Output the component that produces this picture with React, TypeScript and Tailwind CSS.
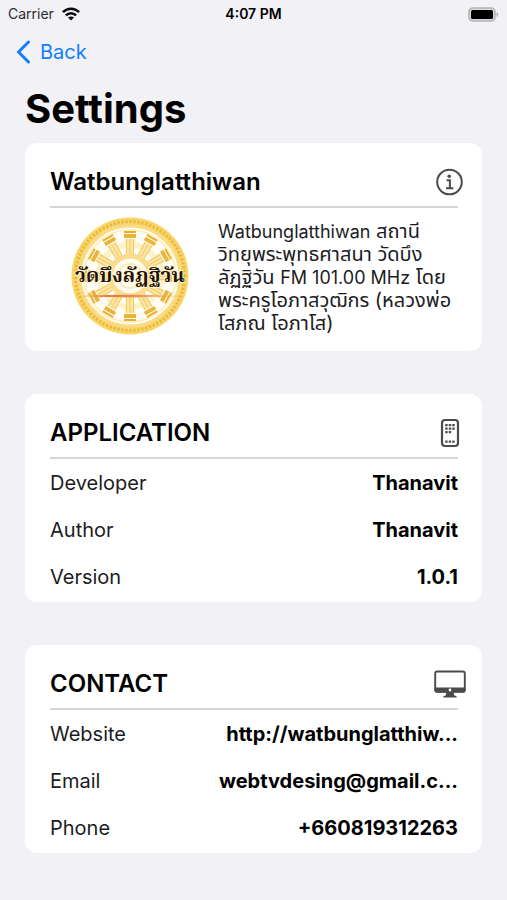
import type { ReactNode } from 'react'

const SPOKES = Array.from({ length: 12 }, (_, i) => i * 30)

function WifiIcon() {
  return (
    <svg width="18" height="14" viewBox="0 0 18 14" fill="none" stroke="#0b0b0d" strokeWidth="2.5" aria-hidden="true">
      <path d="M.9 5.200C5.500.5 12.500.5 17.100 5.200" />
      <path d="M3.900 8.400c2.900-3 7.300-3 10.200 0" />
      <path d="M9 13.600 6 10.600c1.700-1.600 4.300-1.600 6 0z" fill="#0b0b0d" stroke="none" />
    </svg>
  )
}

function BatteryIcon() {
  return (
    <svg width="31" height="15" viewBox="0 0 31 15" aria-hidden="true">
      <rect x="1" y="1" width="26" height="13" rx="4" fill="#d9d9dc" stroke="#b4b4b6" strokeWidth="1.600" />
      <rect x="3" y="3" width="22" height="9" rx="1.500" fill="#000" />
      <path d="M28.500 5.200c2.200.7 2.200 3.900 0 4.600z" fill="#b4b4b6" />
    </svg>
  )
}

function InfoIcon() {
  return (
    <svg width="32" height="32" viewBox="0 0 32 32" fill="none" stroke="#4b4b4b" strokeWidth="2" aria-hidden="true">
      <circle cx="15.500" cy="16" r="12.300" />
      <circle cx="15.200" cy="10.200" r="1.800" fill="#4b4b4b" stroke="none" />
      <path d="M12.500 14.300h3.400v8M12 22.300h7.400" />
    </svg>
  )
}

function PhoneIcon() {
  return (
    <svg width="32" height="32" viewBox="0 0 32 32" fill="#4b4b4b" aria-hidden="true">
      <rect x="8" y="3" width="16" height="26" rx="3" fill="none" stroke="#4b4b4b" strokeWidth="2.200" />
      {[7, 10.500, 14].map((y, row) =>
        [11.200, 14.700, 18.200].map((x) =>
          row === 2 && x > 18 ? null : <rect key={`${x}-${y}`} x={x} y={y} width="2.500" height="2.200" rx="0.500" />
        )
      )}
      {[11.200, 14.700, 18.200].map((x) => (
        <rect key={x} x={x} y="23.500" width="2.500" height="2.200" rx="0.500" />
      ))}
    </svg>
  )
}

function MonitorIcon() {
  return (
    <svg width="32" height="32" viewBox="0 0 32 32" fill="#4b4b4b" aria-hidden="true">
      <rect x="1.200" y="3.500" width="29.600" height="20" rx="2" fill="none" stroke="#4b4b4b" strokeWidth="1.900" />
      <path d="M.5 19.500h31v3.200a2 2 0 0 1-2 2h-27a2 2 0 0 1-2-2z" />
      <path d="M12.500 24h7l.8 3.600 2.300.7v1.200H9.400v-1.200l2.300-.7z" />
      <circle cx="16" cy="22" r="1.400" fill="#fff" />
    </svg>
  )
}

function TempleSeal() {
  return (
    <svg width="120" height="120" viewBox="0 0 120 120" role="img" aria-label="วัดบึงลัฏฐิวัน">
      <defs>
        <linearGradient id="flare">
          <stop offset="0" stopColor="#f0a860" stopOpacity="0" />
          <stop offset="0.3" stopColor="#e07a3c" />
          <stop offset="0.6" stopColor="#e8965a" />
          <stop offset="1" stopColor="#f0a860" stopOpacity="0" />
        </linearGradient>
      </defs>
      <circle cx="60" cy="60" r="58.500" fill="#f8d568" />
      <circle cx="60" cy="60" r="54.500" fill="none" stroke="#e9b53a" strokeWidth="3" strokeDasharray="2 2" />
      <circle cx="60" cy="60" r="50" fill="#fffdf6" stroke="#f9dd86" strokeWidth="3" />
      <circle cx="60" cy="60" r="46" fill="none" stroke="#fdf0c4" strokeWidth="2" />
      <circle cx="60" cy="60" r="31" fill="none" stroke="#fdf1c9" strokeWidth="6" />
      {SPOKES.map((angle) => (
        <g key={angle} transform={`rotate(${angle} 60 60)`}>
          <rect x="54" y="15" width="12" height="2" fill="#e9b02c" />
          <rect x="54" y="18" width="12" height="4" fill="#eab43a" />
          <path d="M55 23h10l-1.500 16h-7z" fill="#fbe6a8" />
          <path d="M56.500 23v15M60 23v16M63.500 23v15" stroke="#f2ca62" strokeWidth="1" />
        </g>
      ))}
      <circle cx="60" cy="60" r="20" fill="#fffaf0" stroke="#f9dd8c" strokeWidth="5" />
      <circle cx="60" cy="60" r="12" fill="#fff" stroke="#fbe9b5" strokeWidth="2" />
      <ellipse cx="60" cy="80" rx="57" ry="1.200" fill="url(#flare)" />
      <text
        x="60"
        y="66"
        textAnchor="middle"
        fontSize="20"
        fill="#1c1206"
        stroke="#fff3cf"
        strokeWidth="2"
        paintOrder="stroke"
        className="font-['Noto_Serif_Thai','Liberation_Serif',serif] font-bold"
      >
        วัดบึงลัฏฐิวัน
      </text>
    </svg>
  )
}

interface CardProps {
  title: string
  icon: ReactNode
  children: ReactNode
}

function Card({ title, icon, children }: CardProps) {
  return (
    <section className="rounded-xl bg-white pt-5 pr-6 pl-[25px]">
      <header className="flex h-[45px] items-center justify-between border-b-2 border-[#d6d6d8] pb-1.5">
        <h2 className="text-2xl leading-8 font-semibold">{title}</h2>
        <span className="-mr-2">{icon}</span>
      </header>
      {children}
    </section>
  )
}

interface RowProps {
  label: string
  value: string
  href?: string
}

function Row({ label, value, href }: RowProps) {
  return (
    <div className="flex h-[47px] items-center justify-between gap-4">
      <dt className="text-[#1c1c1e]">{label}</dt>
      <dd className="font-bold">{href ? <a href={href}>{value}</a> : value}</dd>
    </div>
  )
}

export default function App() {
  return (
    <div className="min-h-screen bg-[#f1f1f6] pb-11 font-['Inter','Noto_Sans_Thai','Noto_Sans',sans-serif] text-black">
      <div className="grid h-7 grid-cols-3 items-center px-2 text-sm">
        <div className="flex items-center gap-2 text-[#2c2c2e]">
          <span>Carrier</span>
          <WifiIcon />
        </div>
        <time className="text-center font-semibold">4:07 PM</time>
        <div className="flex justify-end">
          <BatteryIcon />
        </div>
      </div>

      <nav className="flex h-12 items-center px-4">
        <a href="#back" className="flex items-center gap-2.5 text-xl text-[#1280fb]">
          <svg width="14" height="24" viewBox="0 0 14 24" fill="none" stroke="#1280fb" strokeWidth="3" strokeLinecap="round" strokeLinejoin="round" aria-hidden="true">
            <path d="M12.500 2 2.500 12l10 10" />
          </svg>
          Back
        </a>
      </nav>

      <main className="px-[25px]">
        <h1 className="flex h-[67px] items-center pb-0.5 text-[40px] font-bold">Settings</h1>

        <div className="flex flex-col gap-[43px]">
          <Card title="Watbunglatthiwan" icon={<InfoIcon />}>
            <div className="flex h-[143px] items-center gap-7 pb-2 pl-5">
              <div className="shrink-0">
                <TempleSeal />
              </div>
              <p className="pt-1 text-xl leading-[23px] whitespace-nowrap text-[#1c1c1e]">
                <span className="text-lg leading-[23px]">Watbunglatthiwan</span> สถานี
                <br />
                วิทยุพระพุทธศาสนา วัดบึง
                <br />
                ลัฏฐิวัน <span className="text-lg leading-[23px]">FM 101.00 MHz</span> โดย
                <br />
                พระครูโอภาสวุฒิกร (หลวงพ่อ
                <br />
                โสภณ โอภาโส)
              </p>
            </div>
          </Card>

          <Card title="APPLICATION" icon={<PhoneIcon />}>
            <dl className="pb-0.5 text-xl">
              <Row label="Developer" value="Thanavit" />
              <Row label="Author" value="Thanavit" />
              <Row label="Version" value="1.0.1" />
            </dl>
          </Card>

          <Card title="CONTACT" icon={<MonitorIcon />}>
            <dl className="pb-0.5 text-xl">
              <Row label="Website" value="http://watbunglatthiw..." href="#website" />
              <Row label="Email" value="webtvdesing@gmail.c..." href="#email" />
              <Row label="Phone" value="+660819312263" href="#phone" />
            </dl>
          </Card>
        </div>
      </main>
    </div>
  )
}
